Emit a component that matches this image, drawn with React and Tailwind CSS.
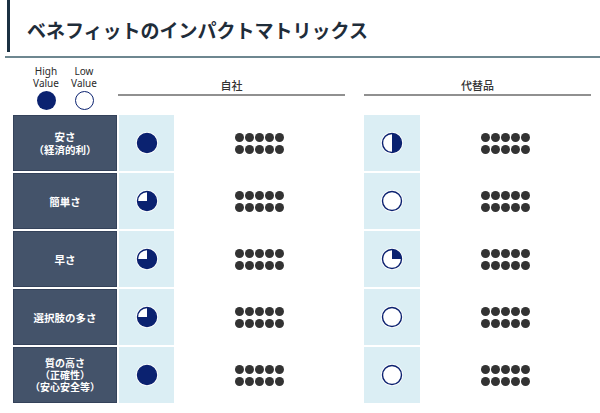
import React from 'react';

const NAVY = '#0b2270';

function Ball({ v }) {
  const c = 11;
  const r = 9.5;
  let path = null;
  if (v > 0 && v < 1) {
    const a = 2 * Math.PI * v;
    const x = c + r * Math.sin(a);
    const y = c - r * Math.cos(a);
    const large = v > 0.5 ? 1 : 0;
    path = `M${c} ${c} L${c} ${c - r} A${r} ${r} 0 ${large} 1 ${x.toFixed(3)} ${y.toFixed(3)} Z`;
  }
  return (
    <svg width="22" height="22" viewBox="0 0 22 22">
      <circle cx="11" cy="11" r="11" fill="white" />
      <circle cx="11" cy="11" r={r} fill={v >= 1 ? NAVY : 'white'} stroke={NAVY} strokeWidth="1.4" />
      {path && <path d={path} fill={NAVY} />}
    </svg>
  );
}

function Dots() {
  return (
    <div className="grid grid-cols-5 gap-x-[1px] gap-y-[3px]">
      {Array.from({ length: 10 }).map((_, i) => (
        <div key={i} className="w-[9px] h-[9px] rounded-full bg-[#333333]" />
      ))}
    </div>
  );
}

const rows = [
  { label: ['安さ', '（経済的利）'], a: 1, b: 0.5 },
  { label: ['簡単さ'], a: 0.75, b: 0 },
  { label: ['早さ'], a: 0.75, b: 0.25 },
  { label: ['選択肢の多さ'], a: 0.75, b: 0 },
  { label: ['質の高さ', '（正確性）', '（安心安全等）'], a: 1, b: 0 },
];

export default function App() {
  return (
    <div
      className="w-[600px] h-[413px] bg-white overflow-hidden"
      style={{ fontFamily: '"Noto Sans CJK JP", "Noto Sans", sans-serif' }}
    >
      <div className="h-[52px] ml-[7px] border-l-[3px] border-[#1b3142] pl-[17px] flex items-center pt-[7px]">
        <h1 className="text-[19px] font-bold text-[#1f2d3a] leading-none">
          ベネフィットのインパクトマトリックス
        </h1>
      </div>
      <div className="mt-[4px] ml-[5px] h-[2px] bg-[#6e8790]" />

      <div className="flex h-[57px]">
        <div className="ml-[13px] w-[104px] flex justify-center gap-[6px] pt-[8px]">
          <div className="flex flex-col items-center w-[32px]">
            <div
              className="text-[10px] leading-[11.5px] text-[#2a2a2a] text-center"
              style={{ fontFamily: '"Noto Sans", sans-serif' }}
            >
              <div>High</div>
              <div>Value</div>
            </div>
            <div className="mt-[2px] w-[19px] h-[19px] rounded-full bg-[#0b2270]" />
          </div>
          <div className="flex flex-col items-center w-[32px]">
            <div
              className="text-[10px] leading-[11.5px] text-[#2a2a2a] text-center"
              style={{ fontFamily: '"Noto Sans", sans-serif' }}
            >
              <div>Low</div>
              <div>Value</div>
            </div>
            <div className="mt-[2px] w-[19px] h-[19px] rounded-full bg-white border-[1.5px] border-[#0b2270]" />
          </div>
        </div>
        <div className="ml-[1px] w-[227px] flex flex-col pt-[20px]">
          <div className="text-[11px] leading-[14px] text-[#333] text-center font-medium">自社</div>
          <div className="mt-[2px] h-[2px] bg-[#909090]" />
        </div>
        <div className="ml-[19px] w-[227px] flex flex-col pt-[20px]">
          <div className="text-[11px] leading-[14px] text-[#333] text-center font-medium">代替品</div>
          <div className="mt-[2px] h-[2px] bg-[#909090]" />
        </div>
      </div>

      <div className="flex flex-col gap-[2px]">
        {rows.map((r, i) => (
          <div key={i} className="flex h-[56px] ml-[13px]">
            <div className="w-[104px] bg-[#44536a] border border-[#34425a] flex flex-col items-center justify-center">
              {r.label.map((t, j) => (
                <div
                  key={j}
                  className={
                    'text-white font-bold ' +
                    (r.label.length > 2 ? 'text-[10px] leading-[12px]' : 'text-[10.5px] leading-[13px]')
                  }
                >
                  {t}
                </div>
              ))}
            </div>
            <div className="ml-[2px] w-[55px] bg-[#dbeef4] flex items-center justify-center">
              <Ball v={r.a} />
            </div>
            <div className="w-[171px] flex items-center justify-center">
              <Dots />
            </div>
            <div className="ml-[19px] w-[56px] bg-[#dbeef4] flex items-center justify-center">
              <Ball v={r.b} />
            </div>
            <div className="w-[171px] flex items-center justify-center">
              <Dots />
            </div>
          </div>
        ))}
      </div>
    </div>
  );
}
